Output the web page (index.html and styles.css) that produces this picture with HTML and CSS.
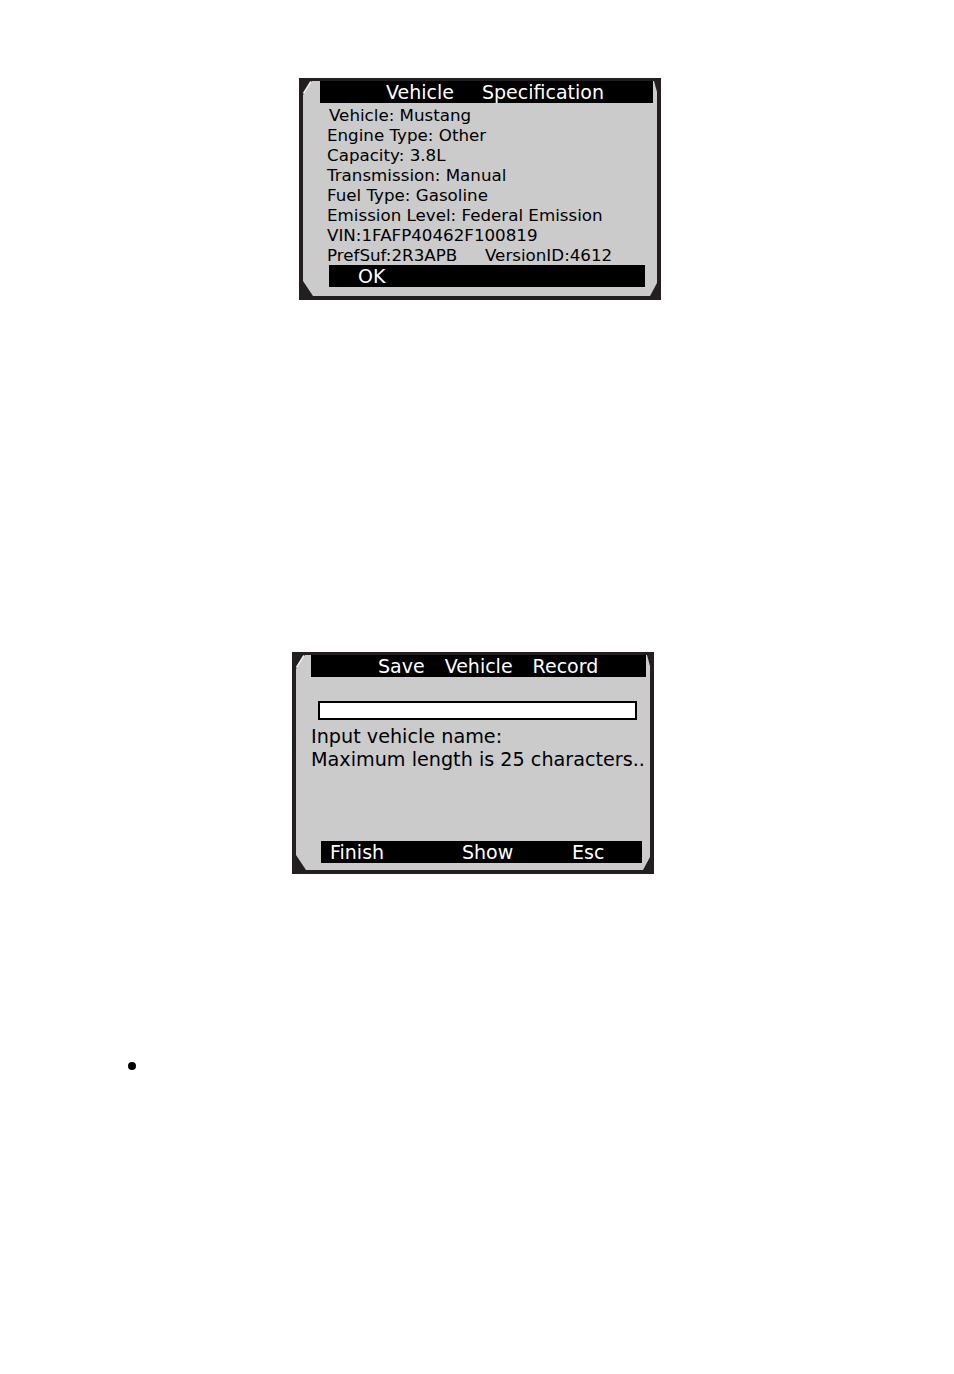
FILE: index.html
```html
<!DOCTYPE html>
<html>
<head>
<meta charset="utf-8">
<link rel="stylesheet" href="styles.css">
</head>
<body>
<div class="page">
  <div class="screen screen-spec">
    <div class="panel">
      <div class="title title-spec"><span>Vehicle</span><span>Specification</span></div>
      <div class="lines">
        <div class="line first">Vehicle: Mustang</div>
        <div class="line">Engine Type: Other</div>
        <div class="line">Capacity: 3.8L</div>
        <div class="line">Transmission: Manual</div>
        <div class="line">Fuel Type: Gasoline</div>
        <div class="line">Emission Level: Federal Emission</div>
        <div class="line">VIN:1FAFP40462F100819</div>
        <div class="line"><span class="pref">PrefSuf:2R3APB</span>VersionID:4612</div>
      </div>
      <div class="okbar">OK</div>
    </div>
    <svg class="glint" width="16" height="18" viewBox="0 0 16 18"><line x1="4.5" y1="15.5" x2="12" y2="3.5" stroke="#f2f2f2" stroke-width="1.6"/></svg>
  </div>

  <div class="screen screen-save">
    <div class="panel">
      <div class="title title-save"><span>Save</span><span>Vehicle</span><span>Record</span></div>
      <div class="inputbox"></div>
      <div class="msg">
        <div class="msgline">Input vehicle name:</div>
        <div class="msgline">Maximum length is 25 characters..</div>
      </div>
      <div class="softkeys"><span class="k1">Finish</span><span class="k2">Show</span><span class="k3">Esc</span></div>
    </div>
    <svg class="glint" width="16" height="18" viewBox="0 0 16 18"><line x1="4.5" y1="15.5" x2="12" y2="3.5" stroke="#f2f2f2" stroke-width="1.6"/></svg>
  </div>

  <div class="bullet"></div>
</div>
</body>
</html>
```
FILE: styles.css
```css
html, body {
  margin: 0;
  padding: 0;
  background: #ffffff;
}

.page {
  padding-top: 78px;
  padding-bottom: 300px;
  font-family: "DejaVu Sans", Verdana, sans-serif;
  color: #000;
}

.screen {
  position: relative;
  width: 362px;
  height: 222px;
  box-sizing: border-box;
  padding: 3px 4px 4px 4px;
  background: #231f20;
}

.screen-spec {
  margin-left: 299px;
}

.screen-save {
  margin-left: 292px;
  margin-top: 352px;
}

.panel {
  height: 100%;
  background: #cbcbcb;
  display: flex;
  flex-direction: column;
  clip-path: polygon(9px 0, calc(100% - 3px) 0, 100% 11px, 100% calc(100% - 13px), calc(100% - 7px) 100%, 10px 100%, 0 calc(100% - 15px), 0 14px);
}

.glint {
  position: absolute;
  left: 0;
  top: 0;
}

.title {
  background: #000;
  color: #fff;
  height: 22px;
  font-size: 19px;
  line-height: 22px;
  display: flex;
  white-space: nowrap;
}

.title-spec {
  margin: 0 4px 0 17px;
  padding-left: 66px;
  gap: 28px;
}

.title-save {
  margin: 0 4px 0 15px;
  padding-left: 67px;
  gap: 20px;
}

.lines {
  padding-top: 2px;
  padding-left: 24px;
  font-size: 16.7px;
  line-height: 20px;
  white-space: nowrap;
}

.line.first {
  padding-left: 2px;
}

.pref {
  display: inline-block;
  width: 158px;
}

.okbar {
  margin: 0 12px 0 26px;
  height: 22px;
  background: #000;
  color: #fff;
  font-size: 19px;
  line-height: 22px;
  padding-left: 29px;
}

.inputbox {
  margin: 24px 13px 0 22px;
  height: 19px;
  box-sizing: border-box;
  border: 2px solid #000;
  background: #fff;
}

.msg {
  margin-top: 5px;
  padding-left: 15px;
  font-size: 19.2px;
  line-height: 23px;
  white-space: nowrap;
}

.softkeys {
  margin: auto 8px 7px 25px;
  height: 22px;
  background: #000;
  color: #fff;
  font-size: 19px;
  line-height: 22px;
  padding-left: 9px;
  display: flex;
  white-space: nowrap;
}

.k1 {
  width: 132px;
}

.k2 {
  width: 110px;
}

.bullet {
  margin: 188px 0 0 128px;
  width: 8px;
  height: 8px;
  border-radius: 50%;
  background: #000;
}
```
